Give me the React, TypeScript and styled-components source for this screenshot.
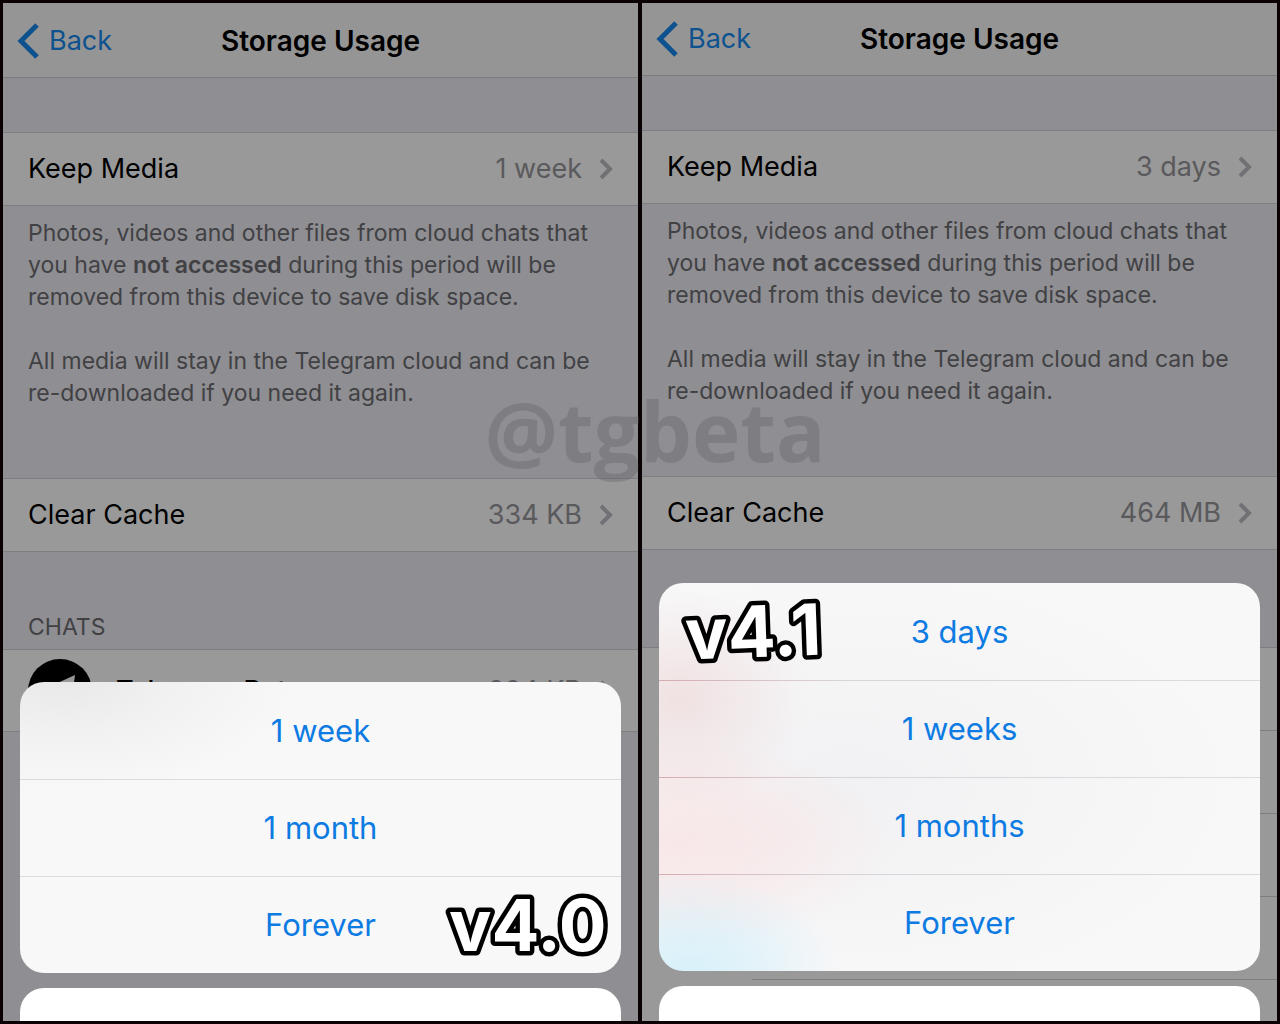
import React from "react";
import styled, { createGlobalStyle } from "styled-components";

const GlobalStyle = createGlobalStyle`
  *, *::before, *::after { box-sizing: border-box; }
  body { margin: 0; background: #0a0003; }
  button { appearance: none; border: 0; padding: 0; margin: 0; background: none; font: inherit; text-align: inherit; cursor: pointer; }
`;

const Comparison = styled.main`
  position: relative;
  display: grid;
  grid-template-columns: 1fr 1fr;
  gap: 4px;
  height: 100vh;
  padding: 3px;
  overflow: hidden;
  font-family: Inter, "Liberation Sans", sans-serif;
  font-size: 27px;
  line-height: 32px;
  color: #000;
`;

const Phone = styled.section`
  position: relative;
  overflow: hidden;
  background: #eeedf4;
`;

const NavBar = styled.header<{ $top: number }>`
  display: grid;
  grid-template-columns: 1fr auto 1fr;
  align-items: center;
  padding: ${(p) => p.$top}px 14px 0;
  background: #f8f8f8;
  border-bottom: 1px solid #cdcdd0;
`;

const BackButton = styled.button`
  display: flex;
  align-items: center;
  justify-self: start;
  gap: 10px;
  height: 72px;
  color: #1788ee;
`;

const Title = styled.h1`
  margin: 0;
  font-size: 28px;
  line-height: 32px;
  font-weight: 600;
`;

const Group = styled.div<{ $space?: number }>`
  margin-top: ${(p) => p.$space ?? 0}px;
  background: #fff;
  border-top: 1px solid #d2d1d7;
  border-bottom: 1px solid #d2d1d7;
`;

const Row = styled.button<{ $height: number }>`
  display: flex;
  align-items: center;
  width: 100%;
  height: ${(p) => p.$height}px;
  padding: 0 25px;
`;

const Label = styled.span<{ $medium?: boolean }>`
  flex: 1;
  font-weight: ${(p) => (p.$medium ? 500 : 400)};
`;

const Value = styled.span`
  margin-right: 17px;
  color: #96969c;
`;

const Note = styled.div`
  height: 272px;
  padding: 11px 25px 0;
  font-size: 23px;
  line-height: 32px;
  color: #6d6d72;

  p { margin: 0 0 32px; }
  strong { font-weight: 600; }
`;

const SectionTitle = styled.h2`
  margin: 59px 0 0;
  padding: 0 25px 6px;
  font-size: 23px;
  line-height: 32px;
  font-weight: 400;
  color: #6d6d72;
`;

const Avatar = styled.svg`
  width: 64px;
  height: 64px;
  margin-right: 24px;
`;

const ChatSlot = styled.div`
  height: 83px;
  margin-left: 110px;
  border-bottom: 1px solid #d2d1d7;
`;

const Dim = styled.div`
  position: absolute;
  inset: 0;
  background: rgba(0, 0, 0, 0.4);
`;

const Sheet = styled.div<{ $bottom: number }>`
  position: absolute;
  left: 17px;
  right: 17px;
  bottom: ${(p) => p.$bottom}px;
  display: flex;
  flex-direction: column;
  gap: 15px;
`;

const Option = styled.button`
  display: block;
  width: 100%;
  height: 97px;
  font-size: 31px;
  line-height: 40px;
  text-align: center;
  color: #0d7be2;
`;

const Options = styled.div<{ $tint: string; $line: string }>`
  position: relative;
  overflow: hidden;
  border-radius: 24px;
  background: ${(p) => p.$tint}, #f8f8f9;

  ${Option} + ${Option} {
    border-top: 1px solid transparent;
    background: ${(p) => p.$line} top / 100% 1px no-repeat border-box;
  }
`;

const Cancel = styled.button`
  height: 97px;
  border-radius: 24px;
  background: #fff;
`;

const Version = styled.svg<{ $place: "start" | "end" }>`
  position: absolute;
  ${(p) =>
    p.$place === "start"
      ? "top: 8px; left: 18px;"
      : "bottom: 8px; right: 10px;"}
  width: 170px;
  height: 80px;
  overflow: visible;
  pointer-events: none;
  font-family: Inter, "Liberation Sans", sans-serif;
  font-size: 71px;
  font-weight: 700;
  fill: #fff;
  stroke: #000;
  stroke-width: 9px;
  stroke-linejoin: round;
  paint-order: stroke fill;
`;

const Watermark = styled.div`
  position: absolute;
  left: 0;
  right: 0;
  top: 380px;
  padding-left: 30px;
  font-family: "Open Sans", "Noto Sans", sans-serif;
  font-size: 82px;
  line-height: 100px;
  font-weight: 700;
  text-align: center;
  color: rgba(90, 90, 94, 0.3);
  pointer-events: none;
`;

const BackArrow = () => (
  <svg width="22" height="36" viewBox="0 0 22 36" fill="none" aria-hidden="true">
    <path d="M20 2 4 18 20 34" stroke="currentColor" strokeWidth="5" />
  </svg>
);

const Disclosure = () => (
  <svg width="14" height="22" viewBox="0 0 14 22" fill="none" aria-hidden="true">
    <path d="M2 2 11 11 2 20" stroke="#bdbdc3" strokeWidth="4" />
  </svg>
);

const GREY_TINT =
  "radial-gradient(ellipse 230px 110px at 45px 0px, rgba(110,110,110,0.11), rgba(110,110,110,0.05) 45%, rgba(110,110,110,0))";
const COLOUR_TINT = [
  "radial-gradient(ellipse 150px 100px at 30px 388px, rgba(190,235,250,0.55), rgba(190,235,250,0.35) 45%, rgba(190,235,250,0))",
  "radial-gradient(ellipse 220px 105px at 20px 260px, rgba(255,205,205,0.35), rgba(255,205,205,0.22) 50%, rgba(255,205,205,0))",
  "radial-gradient(ellipse 130px 110px at 20px 115px, rgba(225,165,165,0.25), rgba(225,165,165,0.14) 45%, rgba(225,165,165,0))",
  "radial-gradient(ellipse 400px 220px at 190px 200px, rgba(215,215,220,0.2), rgba(215,215,220,0))",
].join(", ");
const GREY_LINE = "linear-gradient(#dcdce0, #dcdce0)";
const COLOUR_LINE = "linear-gradient(to right, #d6adb1, #d8d3d7 30%, #dcdce0)";

interface ScreenProps {
  version: string;
  top: number;
  keep: string;
  cache: string;
  options: string[];
  sheetBottom: number;
  tint: string;
  line: string;
  place: "start" | "end";
  children: React.ReactNode;
}

function StorageScreen(p: ScreenProps) {
  return (
    <Phone aria-label={p.version}>
      <NavBar $top={p.top}>
        <BackButton>
          <BackArrow />
          Back
        </BackButton>
        <Title>Storage Usage</Title>
      </NavBar>
      <Group $space={54}>
        <Row $height={72}>
          <Label>Keep Media</Label>
          <Value>{p.keep}</Value>
          <Disclosure />
        </Row>
      </Group>
      <Note>
        <p>
          Photos, videos and other files from cloud chats that you have{" "}
          <strong>not accessed</strong> during this period will be removed from
          this device to save disk space.
        </p>
        <p>
          All media will stay in the Telegram cloud and can be re-downloaded if
          you need it again.
        </p>
      </Note>
      <Group>
        <Row $height={72}>
          <Label>Clear Cache</Label>
          <Value>{p.cache}</Value>
          <Disclosure />
        </Row>
      </Group>
      {p.children}
      <Dim />
      <Sheet $bottom={p.sheetBottom} role="dialog" aria-label="Keep Media">
        <Options $tint={p.tint} $line={p.line}>
          {p.options.map((o) => (
            <Option key={o}>{o}</Option>
          ))}
          <Version $place={p.place} viewBox="0 0 170 80">
            <text
              x="8"
              y="66"
              transform={p.place === "start" ? "rotate(-2 80 40)" : undefined}
            >
              {p.version}
            </text>
          </Version>
        </Options>
        <Cancel aria-label="Cancel" />
      </Sheet>
    </Phone>
  );
}

export default function App() {
  return (
    <>
      <GlobalStyle />
      <Comparison>
        <StorageScreen
          version="v4.0"
          top={2}
          keep="1 week"
          cache="334 KB"
          options={["1 week", "1 month", "Forever"]}
          sheetBottom={-64}
          tint={GREY_TINT}
          line={GREY_LINE}
          place="end"
        >
          <SectionTitle>CHATS</SectionTitle>
          <Group>
            <Row $height={81}>
              <Avatar viewBox="0 0 64 64" aria-hidden="true">
                <circle cx="32" cy="32" r="32" fill="#000" />
                <path d="M12 32 47 16 43 47 32 39 27 44 26 36Z" fill="#fff" />
              </Avatar>
              <Label $medium>Telegram Beta</Label>
              <Value>334 KB</Value>
              <Disclosure />
            </Row>
          </Group>
        </StorageScreen>
        <StorageScreen
          version="v4.1"
          top={0}
          keep="3 days"
          cache="464 MB"
          options={["3 days", "1 weeks", "1 months", "Forever"]}
          sheetBottom={-62}
          tint={COLOUR_TINT}
          line={COLOUR_LINE}
          place="start"
        >
          <Group $space={97}>
            <ChatSlot />
            <ChatSlot />
            <ChatSlot />
            <ChatSlot />
            <ChatSlot />
          </Group>
        </StorageScreen>
        <Watermark aria-hidden="true">@tgbeta</Watermark>
      </Comparison>
    </>
  );
}
